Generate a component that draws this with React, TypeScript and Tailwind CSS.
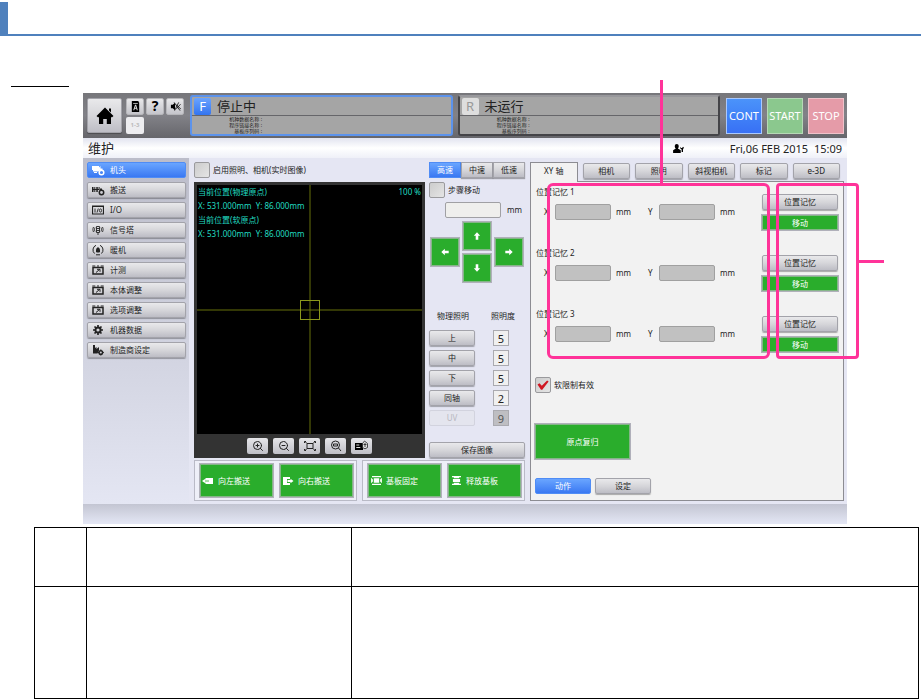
import { useState } from "react";
import type { ReactNode } from "react";
import { ZoomIn, ZoomOut } from "lucide-react";

const GREY =
  "border border-[#a3a3aa] bg-linear-to-b from-[#e9e9eb] via-[#d6d6da] to-[#bdbdc5] text-[#222] shadow-[0_1px_1px_rgba(0,0,0,0.3)]";
const GREEN =
  "border border-[#85b688] bg-[#2aad2c] text-white shadow-[0_0_0_1px_#b0b0ba]";
const BLUE =
  "border border-[#4f8cf5] bg-linear-to-b from-[#6aa5ff] to-[#3a78f2] text-white";

const menu = [
  { label: "机头", icon: <HeadIcon /> },
  { label: "搬送", icon: <ConveyIcon /> },
  { label: "I/O", icon: <IoIcon /> },
  { label: "信号塔", icon: <TowerIcon /> },
  { label: "暖机", icon: <WarmIcon /> },
  { label: "计测", icon: <MeterIcon /> },
  { label: "本体调整", icon: <MeterIcon /> },
  { label: "选项调整", icon: <MeterIcon /> },
  { label: "机器数据", icon: <GearIcon /> },
  { label: "制造商设定", icon: <MakerIcon /> },
];

const tabs = ["XY 轴", "相机", "照明", "斜视相机", "标记", "e-3D"];
const lights = [
  { label: "上", value: 5 },
  { label: "中", value: 5 },
  { label: "下", value: 5 },
  { label: "同轴", value: 2 },
  { label: "UV", value: 9, disabled: true },
];

export default function App() {
  return (
    <div className="overflow-x-hidden bg-white pt-[2px] font-['Noto_Sans','Noto_Sans_CJK_SC',sans-serif] text-[8px] leading-none text-[#222]">
      <div className="h-[34px] border-b-2 border-[#4f81bd]">
        <div className="h-8 w-2 bg-[#4f81bd]" />
      </div>
      <div className="mt-[50px] ml-[11px] h-px w-[58px] bg-black" />
      <div className="mt-[6px] mr-[74px] ml-[83px]">
        <Console />
      </div>
      <table className="mt-[3px] ml-[34px] w-[calc(100%-36px)] table-fixed border-collapse">
        <colgroup>
          <col className="w-[52px]" />
          <col className="w-[265px]" />
          <col />
        </colgroup>
        <tbody>
          <tr className="h-[59px]">
            <td className="border border-black" />
            <td className="border border-black" />
            <td className="border border-black" />
          </tr>
          <tr className="h-[112px]">
            <td className="border border-black" />
            <td className="border border-black" />
            <td className="border border-black" />
          </tr>
        </tbody>
      </table>
    </div>
  );
}

function Console() {
  return (
    <main className="bg-[#e5e6f3]">
      <Header />
      <div className="flex h-5 items-center bg-linear-to-b from-[#e2e4f0] via-white to-[#eff0f8] px-[5px]">
        <h1 className="text-[13px]">维护</h1>
        <UserIcon />
        <time className="ml-[46px] text-[11px] whitespace-pre">Fri,06 FEB 2015  15:09</time>
      </div>
      <div className="flex">
        <SideMenu />
        <div className="grid min-w-0 flex-1 grid-cols-[331fr_314fr] gap-[5px] pt-1 pr-[3px] pb-[3px] pl-[5px]">
          <div className="flex min-w-0 flex-col">
            <div className="flex flex-1 gap-1">
              <Camera />
              <Controls />
            </div>
            <div className="mt-[2px] grid h-[41px] grid-cols-2 gap-[5px]">
              <div className="grid grid-cols-2 gap-[7px] border border-[#b9bac6] bg-[#eeeff8] p-[3px] pl-[5px]">
                <GreenAction icon={<LeftOutIcon />} label="向左搬送" />
                <GreenAction icon={<RightOutIcon />} label="向右搬送" />
              </div>
              <div className="grid grid-cols-2 gap-[7px] border border-[#b9bac6] bg-[#eeeff8] p-[3px] pl-[5px]">
                <GreenAction icon={<ClampIcon />} label="基板固定" />
                <GreenAction icon={<ReleaseIcon />} label="释放基板" />
              </div>
            </div>
          </div>
          <AxisPanel />
        </div>
      </div>
      <div className="h-5 bg-linear-to-b from-[#c3c5d2] to-[#e4e7f5]" />
    </main>
  );
}

function Header() {
  return (
    <header className="flex h-[45px] items-center bg-linear-to-b from-[#77777b] via-[#828288] to-[#66666b] pr-[3px] pl-1">
      <button aria-label="Home" className={`flex size-[35px] items-center justify-center rounded-xs ${GREY}`}>
        <svg viewBox="0 0 20 20" className="size-5">
          <path d="M10 1.5 18.5 10 16.8 11.4 16 10.8V18h-4.2v-5H8.2v5H4v-7.2l-.8.6L1.5 10Z M14 2.5h2v4l-2-2Z" />
        </svg>
      </button>
      <div className="ml-1 grid grid-cols-3 gap-[2px]">
        <SquareButton label="Language">
          <svg viewBox="0 0 12 12" className="size-[11px]">
            <path d="M2 0h7l1 2v10H2Z" />
            <path d="M3.5 2.5h5v.7h-5ZM5.500 4h1.200L8.500 10H7.400l-.5-1.600H5.200L4.600 10H3.500Zm.5 1.500L5.500 7.400h1.200Z" fill="#ddd" fillRule="evenodd" />
          </svg>
        </SquareButton>
        <SquareButton label="Help">
          <span className="text-[14px] font-bold">?</span>
        </SquareButton>
        <SquareButton label="Mute">
          <svg viewBox="0 0 12 12" className="size-[11px]">
            <path d="M1 4.200h2L5.500 2v8L3 7.800H1Z" />
            <path d="m4.500 1.500 6.500 9M9.500 1.500 5 10.500M7 4l5 5M11.500 3.500 7 8.500" stroke="#111" strokeWidth=".9" fill="none" />
          </svg>
        </SquareButton>
        <button disabled className="flex h-[17px] w-[18px] items-center justify-center rounded-xs bg-[#ededf0] text-[6px] font-bold text-[#bbb]">
          1-3
        </button>
      </div>
      <div className="ml-[6px] grid min-w-0 flex-1 grid-cols-2 gap-[5px]">
        <StatusPanel letter="F" status="停止中" active />
        <StatusPanel letter="R" status="未运行" />
      </div>
      <div className="ml-[6px] flex gap-[5px] text-[11px] text-white">
        <button className="size-9 border border-[#a9c9ff] bg-linear-to-b from-[#4b93fa] to-[#3870f5]">CONT</button>
        <button className="size-9 border border-[#b5d9b6] bg-[#8bc88e]">START</button>
        <button className="size-9 border border-[#f0c2ca] bg-[#e59ba8]">STOP</button>
      </div>
    </header>
  );
}

function SquareButton({ label, children }: { label: string; children: ReactNode }) {
  return (
    <button aria-label={label} className="flex h-[17px] w-[18px] items-center justify-center rounded-xs border border-[#b6b6ba] bg-linear-to-b from-[#e8e8ea] to-[#c5c5cb] text-black">
      {children}
    </button>
  );
}

function StatusPanel({ letter, status, active = false }: { letter: string; status: string; active?: boolean }) {
  return (
    <section
      className={`h-[41px] min-w-0 overflow-hidden rounded-[3px] border-2 bg-[#a5a5a5] ${
        active ? "border-[#5c93ec]" : "border-[#444448] border-t-[#98989c]"
      }`}
    >
      <div className="flex h-[19px] items-center gap-[6px] border-b border-[#66666a] pl-[2px]">
        <span
          className={`flex size-[17px] items-center justify-center rounded-xs text-[13px] ${
            active ? "bg-linear-to-b from-[#6ba4ff] to-[#3374ef] text-white" : "bg-[#dedede] text-[#999]"
          }`}
        >
          {letter}
        </span>
        <h2 className="text-[13px]">{status}</h2>
      </div>
      <div className="w-[70px] text-right text-[5px] leading-[6px] whitespace-nowrap">
        <p>机种数据名称 :</p>
        <p>程序链接名称 :</p>
        <p>基板序列码 :</p>
      </div>
    </section>
  );
}

function SideMenu() {
  const [current, setCurrent] = useState(0);

  return (
    <nav className="flex w-[106px] flex-col gap-1 bg-linear-to-b from-[#bcbdca] via-[#cfd1de] to-[#e4e6f3] px-1 pt-1 pr-[3px]">
      {menu.map((item, i) => (
        <button
          key={item.label}
          onClick={() => setCurrent(i)}
          className={`flex h-4 items-center gap-[6px] rounded-xs pl-1 ${i === current ? BLUE : GREY}`}
        >
          <span className="flex w-[12px] justify-center">{item.icon}</span>
          {item.label}
        </button>
      ))}
    </nav>
  );
}

function Check({ id, label, defaultChecked = false }: { id: string; label: string; defaultChecked?: boolean }) {
  return (
    <div className="flex h-4 items-center gap-[3px]">
      <span className="relative size-4">
        <input
          id={id}
          type="checkbox"
          defaultChecked={defaultChecked}
          className="peer block size-4 appearance-none rounded-xs border border-[#9a9a9d] bg-linear-to-br from-[#ccc] to-[#e5e5e5]"
        />
        <svg viewBox="0 0 16 16" className="pointer-events-none absolute inset-0 hidden size-4 peer-checked:block">
          <path d="m2.500 7.500 2-1.300 2.300 2.600 5.300-5.200 1.500 1-6.300 8.200H6Z" fill="#d01722" />
        </svg>
      </span>
      <label htmlFor={id} className="whitespace-nowrap">{label}</label>
    </div>
  );
}

function Camera() {
  return (
    <div className="flex min-w-0 flex-1 flex-col gap-1">
      <Check id="live" label="启用照明、相机(实时图像)" />
      <div className="flex flex-1 flex-col bg-[#333] px-[3px] pt-[3px]">
        <div className="relative flex-1 bg-black text-[#20dcc0]">
          <div className="absolute inset-y-0 left-1/2 w-px -translate-x-1/2 bg-[#66700a]" />
          <div className="absolute inset-x-0 top-1/2 h-px -translate-y-1/2 bg-[#66700a]" />
          <div className="absolute top-1/2 left-1/2 size-5 -translate-1/2 border border-[#8b981c]" />
          <div className="relative flex justify-between px-px leading-[14px] whitespace-pre">
            <div>
              <p>当前位置(物理原点)</p>
              <p>X: 531.000mm  Y: 86.000mm</p>
              <p>当前位置(软原点)</p>
              <p>X: 531.000mm  Y: 86.000mm</p>
            </div>
            <p>100 %</p>
          </div>
        </div>
        <div className="flex h-6 items-center justify-center gap-[5px]">
          <ToolButton label="放大"><ZoomIn className="size-3" /></ToolButton>
          <ToolButton label="缩小"><ZoomOut className="size-3" /></ToolButton>
          <ToolButton label="全屏">
            <svg viewBox="0 0 12 12" className="size-3" fill="none" stroke="#222">
              <path d="M3 3.500h6v5H3ZM1 1.500l2 2M11 1.500l-2 2M1 10.500l2-2M11 10.500l-2-2M.5 3V1.500h1.500M10 1.500h1.500V3M.5 9v1.500h1.500M10 10.500h1.500V9" />
            </svg>
          </ToolButton>
          <ToolButton label="原尺寸">
            <svg viewBox="0 0 12 12" className="size-3" fill="none" stroke="#222">
              <circle cx="5.500" cy="5" r="4" />
              <path d="m8.500 8 2.500 3M3.500 4h4v2h-4Z" />
            </svg>
          </ToolButton>
          <ToolButton label="图像设定">
            <svg viewBox="0 0 14 12" className="h-3 w-[14px]">
              <path d="M0 3h8v7H0Z" />
              <path d="M1.300 5h3M1.300 7.500h4" stroke="#ddd" />
              <path d="m9.500 1 3 2.500v4l-2.500 1.300-2.500-1.300v-4Z" fill="#ddd" stroke="#222" strokeWidth=".8" />
              <path d="M8.500 4.500h3M10 3v4" stroke="#222" strokeWidth=".8" />
            </svg>
          </ToolButton>
        </div>
      </div>
    </div>
  );
}

function ToolButton({ label, children }: { label: string; children: ReactNode }) {
  return (
    <button aria-label={label} className="flex h-4 w-[21px] items-center justify-center rounded-xs bg-linear-to-b from-[#e6e6e9] to-[#bfbfc7] text-[#222]">
      {children}
    </button>
  );
}

function Controls() {
  const [speed, setSpeed] = useState("高速");

  return (
    <div className="flex w-24 flex-col">
      <div className="grid grid-cols-3">
        {["高速", "中速", "低速"].map((name) => (
          <button key={name} onClick={() => setSpeed(name)} className={`h-4 ${speed === name ? BLUE : GREY}`}>
            {name}
          </button>
        ))}
      </div>
      <div className="mt-1">
        <Check id="step" label="步骤移动" />
      </div>
      <div className="mt-1 flex h-4 items-center gap-[6px] pl-4">
        <input aria-label="步骤" className="h-4 w-14 rounded-xs border border-[#a0a0a4] bg-[#efefed]" />
        <span>mm</span>
      </div>
      <div className="mt-1 flex items-center justify-center gap-1">
        <ArrowButton label="左" turn="-rotate-90" />
        <div className="flex flex-col gap-1">
          <ArrowButton label="前" turn="" />
          <ArrowButton label="后" turn="rotate-180" />
        </div>
        <ArrowButton label="右" turn="rotate-90" />
      </div>
      <div className="mt-[26px] flex h-4 items-center justify-between pr-[10px] pl-2">
        <span>物理照明</span>
        <span>照明度</span>
      </div>
      <div className="mt-[6px] flex flex-col gap-1">
        {lights.map((light) => (
          <div key={light.label} className="flex justify-between pr-4">
            <button
              disabled={light.disabled}
              className={`h-4 w-[46px] rounded-xs ${
                light.disabled ? "border border-[#d2d3de] bg-[#e4e5ee] text-[#b8b8c0]" : GREY
              }`}
            >
              {light.label}
            </button>
            <input
              aria-label={`${light.label} 照明度`}
              defaultValue={light.value}
              disabled={light.disabled}
              className={`size-4 border border-[#aaaab0] text-center text-[11px] ${
                light.disabled ? "bg-[#bebec2] text-[#555]" : "bg-[#f0f0f0]"
              }`}
            />
          </div>
        ))}
      </div>
      <button className={`mt-4 h-4 rounded-xs ${GREY}`}>保存图像</button>
    </div>
  );
}

function ArrowButton({ label, turn }: { label: string; turn: string }) {
  return (
    <button aria-label={label} className={`flex size-7 items-center justify-center ${GREEN}`}>
      <svg viewBox="0 0 8 8" className={`size-2 ${turn}`}>
        <path d="m4 .3 3.200 3.500H5.300v3.900H2.700V3.800H.8Z" fill="#fff" />
      </svg>
    </button>
  );
}

function GreenAction({ icon, label }: { icon: ReactNode; label: string }) {
  return (
    <button className={`flex min-w-0 items-center gap-[3px] ${GREEN}`}>
      <span className="flex w-[14px] shrink-0 justify-center">{icon}</span>
      <span className="whitespace-nowrap">{label}</span>
    </button>
  );
}

function AxisPanel() {
  const [tab, setTab] = useState(0);

  return (
    <section className="flex min-w-0 flex-col">
      <div className="mr-1 flex h-[19px] gap-[5px]">
        {tabs.map((name, i) => (
          <button
            key={name}
            onClick={() => setTab(i)}
            className={`min-w-0 flex-1 whitespace-nowrap ${
              i === tab
                ? "relative -mb-px h-5 border border-b-0 border-[#8c8c92] bg-[#f2f2f2] pb-1"
                : `mt-px h-4 rounded-xs ${GREY}`
            }`}
          >
            {name}
          </button>
        ))}
      </div>
      <div className="flex-1 border border-[#8c8c92] bg-[#f2f2f2] px-1">
        <div className="relative flex flex-col gap-[15px] pt-[2px] pb-[7px]">
          {[1, 2, 3].map((n) => (
            <MemoryRow key={n} n={n} />
          ))}
          {/* callout around the coordinate fields */}
          <div className="pointer-events-none absolute top-px right-[69px] bottom-0 left-[12px] rounded-md border-3 border-[#ff3399]">
            <div className="absolute bottom-full left-[calc(50%+1px)] h-[106px] w-[3px] bg-[#ff3399]" />
          </div>
          {/* callout around the memory buttons */}
          <div className="pointer-events-none absolute top-px -right-5 bottom-0 w-[83px] rounded-sm border-3 border-[#ff3399]">
            <div className="absolute top-[74px] left-full h-[3px] w-7 bg-[#ff3399]" />
          </div>
        </div>
        <div className="mt-[18px]">
          <Check id="soft-limit" label="软限制有效" defaultChecked />
        </div>
        <button className={`mt-[31px] block h-[35px] w-[95px] ${GREEN}`}>原点复归</button>
        <div className="mt-[19px] mb-[6px] flex gap-1">
          <button className={`h-4 w-14 rounded-xs ${BLUE}`}>动作</button>
          <button className={`h-4 w-14 rounded-xs ${GREY}`}>设定</button>
        </div>
      </div>
    </section>
  );
}

function MemoryRow({ n }: { n: number }) {
  return (
    <div className="flex justify-between">
      <fieldset className="min-w-0 pl-px">
        <legend className="h-4 leading-4">位置记忆 {n}</legend>
        <div className="mt-1 flex items-center">
          <Axis id={`x${n}`} label="X" />
          <div className="w-[10px]" />
          <Axis id={`y${n}`} label="Y" />
        </div>
      </fieldset>
      <div className="mr-px flex w-[76px] flex-col gap-[5px] pt-[10px]">
        <button className={`h-4 rounded-xs ${GREY}`}>位置记忆</button>
        <button className={`h-[15px] ${GREEN}`}>移动</button>
      </div>
    </div>
  );
}

function Axis({ id, label }: { id: string; label: string }) {
  return (
    <div className="flex items-center">
      <label htmlFor={id} className="w-[19px] pl-2">{label}</label>
      <input id={id} disabled className="h-4 w-14 rounded-xs border border-[#a0a0a0] bg-[#c1c1c1]" />
      <span className="w-[19px] pl-[5px]">mm</span>
    </div>
  );
}

function UserIcon() {
  return (
    <svg viewBox="0 0 12 10" className="ml-auto h-[9px] w-[11px]">
      <path d="M4 0c3 0 2.600 4 1.300 5L8.500 7v3H0V7l3-2C1.500 4 1.200 0 4 0ZM8 3l1 1.500h1L11 3l1 1-1 2v3H9.500V6L8 5Z" />
    </svg>
  );
}

function HeadIcon() {
  return (
    <svg viewBox="0 0 13 11" className="h-[11px] w-[13px] shrink-0" fill="currentColor">
      <path d="M0 1h7v1.500L8.500 1v4L6 6.500H1V5H0ZM2 7h3v1H2Z" />
      <circle cx="9.500" cy="7.500" r="2.300" fill="none" stroke="currentColor" strokeWidth="1.500" />
      <path d="M8 3.500h2.500v2H8Z" />
    </svg>
  );
}

function ConveyIcon() {
  return (
    <svg viewBox="0 0 13 11" className="h-[11px] w-[13px] shrink-0" fill="currentColor">
      <path d="M0 2h1.500v5H0ZM2.300 2h1v5h-1ZM4.300 2h1.500v5H4.300ZM6.600 2h1v3h-1ZM0 4h7v1H0Z" />
      <circle cx="9.500" cy="7.500" r="2.200" fill="none" stroke="currentColor" strokeWidth="1.500" />
      <path d="M8 3.500h2v2H8Z" />
    </svg>
  );
}

function IoIcon() {
  return (
    <svg viewBox="0 0 12 10" className="h-[10px] w-3 shrink-0" fill="none" stroke="currentColor">
      <path d="M.5 1h11v8H.5ZM1 1.500h10" strokeWidth="1.200" />
      <path d="M3 3.500v4M6.300 3.500 5 7.500" strokeWidth=".9" />
      <ellipse cx="8.500" cy="5.500" rx="1.100" ry="1.600" strokeWidth=".9" />
    </svg>
  );
}

function TowerIcon() {
  return (
    <svg viewBox="0 0 12 12" className="size-3 shrink-0" fill="none" stroke="currentColor" strokeWidth=".9">
      <path d="M4.500 2.500h3v6h-3ZM4.500 4.500h3M4.500 6.500h3M6 8.500V11M3 3.500c-.7 1.500-.7 2.500 0 4M9 3.500c.7 1.500.7 2.500 0 4M1.500 3c-.8 2-.8 3 0 5M10.500 3c.8 2 .8 3 0 5" />
    </svg>
  );
}

function WarmIcon() {
  return (
    <svg viewBox="0 0 12 12" className="size-3 shrink-0" fill="none" stroke="currentColor">
      <path d="M4 1.300a5 5 0 0 0-1.500 8.200M8 1.300a5 5 0 0 1 1.500 8.200M4 10.800h4" />
      <path d="M4.500 5.500h3v2.500h-3ZM5 4h2v1.500H5Z" fill="currentColor" />
    </svg>
  );
}

function MeterIcon() {
  return (
    <svg viewBox="0 0 12 10" className="h-[10px] w-3 shrink-0" fill="none" stroke="currentColor">
      <path d="M1 2.500h10v6.500H1Z" strokeWidth="1.500" />
      <path d="M.3 1h3M5 1h2M8.700 1h3M4 7.500l3.500-3M5 4.300h3v2.500" />
    </svg>
  );
}

function GearIcon() {
  return (
    <svg viewBox="0 0 12 12" className="size-[10px] shrink-0" fill="none" stroke="currentColor">
      <circle cx="6" cy="6" r="3.100" strokeWidth="2.400" />
      <path d="M6 0v2.500M6 9.500V12M0 6h2.500M9.500 6H12M1.800 1.800l1.700 1.700M8.500 8.500l1.700 1.700M1.800 10.200l1.700-1.700M8.500 3.500l1.700-1.700" strokeWidth="2" />
    </svg>
  );
}

function MakerIcon() {
  return (
    <svg viewBox="0 0 12 12" className="size-3 shrink-0" fill="currentColor">
      <path d="M1 1h2v3l1.500-1v2L7 3v3.500L5.500 9.500H1Z" />
      <circle cx="8.800" cy="8.500" r="1.800" fill="none" stroke="currentColor" strokeWidth="1.500" />
      <path d="M8.200 5.500h1.200v1.500H8.200ZM8.200 10h1.200v1.500H8.200ZM5.800 8h1.500v1H5.800ZM10.300 8h1.500v1h-1.500Z" />
    </svg>
  );
}

function LeftOutIcon() {
  return (
    <svg viewBox="0 0 12 8" className="h-2 w-3">
      <path d="M3.500 1H11v6H3.500V5.800H2.500L0 4l2.500-1.800h1Z" fill="#fff" />
      <path d="M3 4h4" stroke="#2aad2c" strokeWidth=".8" />
    </svg>
  );
}

function RightOutIcon() {
  return (
    <svg viewBox="0 0 12 8" className="h-2 w-3">
      <path d="M1 0h7v2H5v4h3v2H1Z" fill="#fff" />
      <path d="M5.500 3H8.500V1.700L11.500 4 8.500 6.300V5h-3Z" fill="#fff" />
    </svg>
  );
}

function ClampIcon() {
  return (
    <svg viewBox="0 0 12 10" className="h-[9px] w-[11px]">
      <path d="M1 0h10v1.500H1ZM1 8.500h10V10H1ZM3 2.500h6v5H3ZM0 2l2 2v2L0 8ZM12 2l-2 2v2l2 2Z" fill="#fff" />
    </svg>
  );
}

function ReleaseIcon() {
  return (
    <svg viewBox="0 0 12 10" className="h-[9px] w-[11px]">
      <path d="M1 0h10v1.500H9v1H3v-1H1ZM1 10h10V8.500H9v-1H3v1H1ZM2 3.300h8v3.400H2Z" fill="#fff" />
    </svg>
  );
}
